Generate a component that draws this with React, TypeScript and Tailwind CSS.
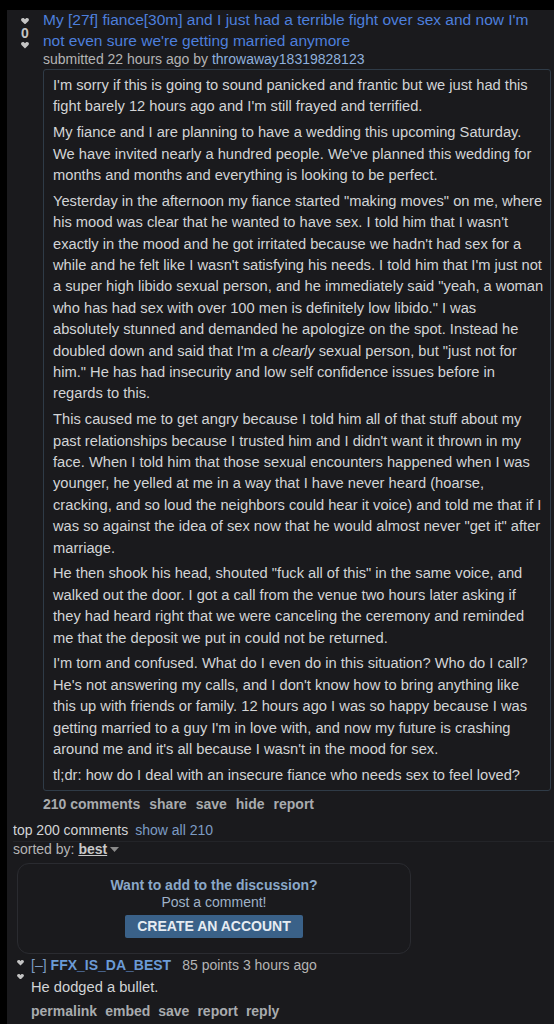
import type { ReactNode } from "react";

const font = { fontFamily: '"Liberation Sans", Arial, sans-serif' };

function VoteArrow({ size = 8 }: { size?: number }) {
  return (
    <svg width={size} height={size * 0.8} viewBox="0 0 10 8" aria-hidden>
      <path
        d="M5 8 L0.6 3.6 C-0.6 2.2 0.4 0 2.4 0 C3.6 0 4.4 0.8 5 1.6 C5.6 0.8 6.4 0 7.6 0 C9.6 0 10.6 2.2 9.4 3.6 Z"
        fill="#c4c4c4"
      />
    </svg>
  );
}

function P({ children }: { children: ReactNode }) {
  return <p className="mb-[4.35px] last:mb-0">{children}</p>;
}

export default function App() {
  return (
    <div className="min-h-screen bg-black pt-[10px] pl-[7px]" style={font}>
      <div className="min-h-[1014px] bg-[#1a1a1d]">
        {/* post */}
        <div className="flex">
          <div className="flex w-[36px] flex-col items-center pt-[8px]">
            <VoteArrow />
            <span className="mt-[1px] text-[14px] font-bold leading-[16px] text-[#c4c4c4]">0</span>
            <span className="mt-[1px]">
              <VoteArrow />
            </span>
          </div>
          <div className="min-w-0 flex-1">
            <a className="-mt-[1px] block pr-[10px] text-[15.5px] leading-[21px] text-[#4d7fdc]">
              My [27f] fiance[30m] and I just had a terrible fight over sex and now I'm not even
              sure we're getting married anymore
            </a>
            <div className="text-[14px] leading-[16px] text-[#b4b4b4]">
              submitted 22 hours ago by{" "}
              <span className="text-[#8fb0dc]">throwaway18319828123</span>
            </div>
            <div className="mt-[2px] mr-[3px] rounded-[3px] border border-[#2f3b47] pt-[5px] pb-[4px] pl-[9px] pr-[5px] text-[14.7px] leading-[21.4px] text-[#d2d4d6]">
              <P>
                I'm sorry if this is going to sound panicked and frantic but we just had this fight
                barely 12 hours ago and I'm still frayed and terrified.
              </P>
              <P>
                My fiance and I are planning to have a wedding this upcoming Saturday. We have
                invited nearly a hundred people. We've planned this wedding for months and months
                and everything is looking to be perfect.
              </P>
              <P>
                Yesterday in the afternoon my fiance started "making moves" on me, where his mood
                was clear that he wanted to have sex. I told him that I wasn't exactly in the mood
                and he got irritated because we hadn't had sex for a while and he felt like I
                wasn't satisfying his needs. I told him that I'm just not a super high libido
                sexual person, and he immediately said "yeah, a woman who has had sex with over 100
                men is definitely low libido." I was absolutely stunned and demanded he apologize on
                the spot. Instead he doubled down and said that I'm a <em>clearly</em> sexual
                person, but "just not for him." He has had insecurity and low self confidence issues
                before in regards to this.
              </P>
              <P>
                This caused me to get angry because I told him all of that stuff about my past
                relationships because I trusted him and I didn't want it thrown in my face. When I
                told him that those sexual encounters happened when I was younger, he yelled at me
                in a way that I have never heard (hoarse, cracking, and so loud the neighbors could
                hear it voice) and told me that if I was so against the idea of sex now that he
                would almost never "get it" after marriage.
              </P>
              <P>
                He then shook his head, shouted "fuck all of this" in the same voice, and walked out
                the door. I got a call from the venue two hours later asking if they had heard right
                that we were canceling the ceremony and reminded me that the deposit we put in could
                not be returned.
              </P>
              <P>
                I'm torn and confused. What do I even do in this situation? Who do I call? He's not
                answering my calls, and I don't know how to bring anything like this up with friends
                or family. 12 hours ago I was so happy because I was getting married to a guy I'm in
                love with, and now my future is crashing around me and it's all because I wasn't in
                the mood for sex.
              </P>
              <P>tl;dr: how do I deal with an insecure fiance who needs sex to feel loved?</P>
            </div>
            <div className="flex gap-[9px] pt-[3px] text-[14px] font-bold leading-[20px] text-[#a8abae]">
              <span>210 comments</span>
              <span>share</span>
              <span>save</span>
              <span>hide</span>
              <span>report</span>
            </div>
          </div>
        </div>

        {/* comment area header */}
        <div className="mt-[6px] pl-[6px]">
          <div className="flex border-b border-[#232428] text-[14px] leading-[21px] text-[#d2d4d6]">
            <span>top 200 comments</span>
            <span className="ml-[7px] text-[#7d9cc4]">show all 210</span>
          </div>
          <div className="flex items-center text-[14px] leading-[15px] text-[#b4b4b4]">
            sorted by:&nbsp;
            <span className="font-bold text-[#c8c8c8] underline">best</span>
            <svg width="9" height="6" viewBox="0 0 9 6" className="ml-[3px] mt-[1px]">
              <path d="M0 0 H9 L4.5 5 Z" fill="#8a8a8a" />
            </svg>
          </div>

          <div className="mt-[6px] ml-[4px] w-[394px] rounded-[12px] border border-[#2a2b30] pt-[13px] pb-[15px] text-center">
            <div className="text-[14px] font-bold leading-[17px] text-[#8aa8c8]">
              Want to add to the discussion?
            </div>
            <div className="text-[14px] leading-[16px] text-[#9fb2c8]">Post a comment!</div>
            <div className="mx-auto mt-[5px] w-[178px] rounded-[2px] bg-[#3a6188] py-[3px] text-[14px] font-bold leading-[17px] text-[#e6ecf2]">
              CREATE AN ACCOUNT
            </div>
          </div>
        </div>

        {/* comment */}
        <div className="mt-[1px] flex pl-[2px]">
          <div className="flex w-[22px] flex-col items-center gap-[8px] pt-[5px]">
            <VoteArrow size={7} />
            <VoteArrow size={7} />
          </div>
          <div>
            <div className="flex items-baseline text-[14px] leading-[20px]">
              <span className="text-[#7d9cc4]">[–]</span>
              <span className="ml-[4px] font-bold text-[#6b9bd6]">FFX_IS_DA_BEST</span>
              <span className="ml-[11px] text-[#b4b4b4]">85 points 3 hours ago</span>
            </div>
            <div className="mt-[2px] text-[14.7px] leading-[21px] text-[#d2d4d6]">
              He dodged a bullet.
            </div>
            <div className="mt-[3px] flex gap-[8px] text-[14px] font-bold leading-[20px] text-[#a8abae]">
              <span>permalink</span>
              <span>embed</span>
              <span>save</span>
              <span>report</span>
              <span>reply</span>
            </div>
          </div>
        </div>
      </div>
    </div>
  );
}
